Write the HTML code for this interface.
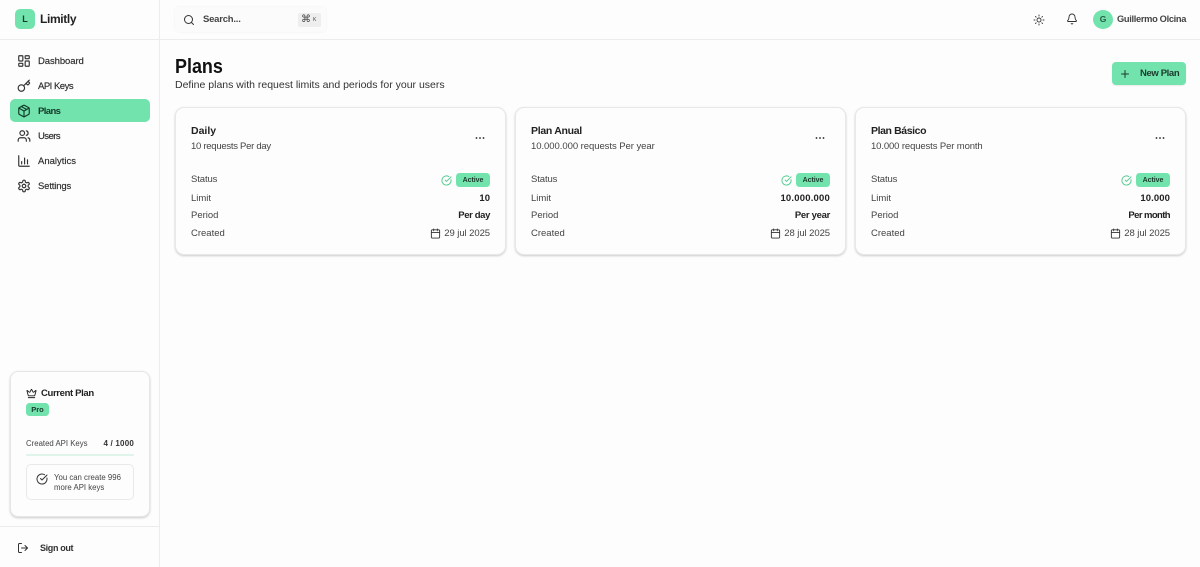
<!DOCTYPE html>
<html><head><meta charset="utf-8"><style>
*{box-sizing:border-box}
html,body{margin:0;padding:0;width:1200px;height:567px;overflow:hidden;background:#fdfdfd;font-family:"Liberation Sans",sans-serif;color:#171717}
.a{position:absolute;white-space:nowrap;line-height:1}
svg{position:absolute;fill:none;stroke:currentColor;stroke-width:2;stroke-linecap:round;stroke-linejoin:round}
.nav{font-size:9.5px;color:#2b2b2b;left:38px;-webkit-text-stroke:.15px #2b2b2b}
.ic{left:17px;color:#333}
.card{position:absolute;top:107px;width:331px;height:148px;border:1px solid #e8e8e8;border-radius:9px;background:#fdfdfd;box-shadow:0 1px 2px rgba(0,0,0,.2)}
.card .t{left:15px;top:18px;font-size:10.5px;font-weight:700;color:#222}
.card .s{left:15px;top:34px;font-size:9.5px;color:#444}
.card .l{left:15px;font-size:9.5px;color:#444}
.card .v{right:15px;font-size:9.5px;color:#222;font-weight:700}
.card .d{right:15px;font-size:9.5px;color:#444;letter-spacing:-.07px;top:121px}
.badge{position:absolute;right:15px;top:65px;width:34px;height:14px;background:#72e3ad;border-radius:3.5px;font-size:7px;font-weight:700;color:#1c3a2c;text-align:center;line-height:15px;letter-spacing:-.05px}
.dots circle{fill:#222;stroke:none}
</style></head><body>

<div class="a" style="left:159px;top:0;width:1px;height:567px;background:#ececec"></div>
<div class="a" style="left:0;top:39px;width:1200px;height:1px;background:#ececec"></div>

<div class="a" style="left:15px;top:9px;width:20px;height:20px;background:#72e3ad;border-radius:5px;text-align:center;line-height:20px;font-size:9px;font-weight:700;color:#173a2a">L</div>
<div class="a" style="left:40px;top:13px;font-size:12px;font-weight:700;color:#222;letter-spacing:-.35px;line-height:13px">Limitly</div>

<div class="a" style="left:10px;top:99px;width:140px;height:23px;background:#72e3ad;border-radius:5px"></div>

<svg class="ic" style="top:54px" width="14" height="14" viewBox="0 0 24 24"><rect x="3" y="3" width="7" height="9" rx="1"/><rect x="14" y="3" width="7" height="5" rx="1"/><rect x="14" y="12" width="7" height="9" rx="1"/><rect x="3" y="16" width="7" height="5" rx="1"/></svg>
<div class="a nav" style="top:57px;letter-spacing:-.08px">Dashboard</div>
<svg class="ic" style="top:79px" width="14" height="14" viewBox="0 0 24 24"><path d="m15.500 7.500 2.300 2.300a1 1 0 0 0 1.400 0l2.100-2.100a1 1 0 0 0 0-1.400L19 4"/><path d="m21 2-9.600 9.600"/><circle cx="7.500" cy="15.500" r="5.500"/></svg>
<div class="a nav" style="top:82px;letter-spacing:-.5px">API Keys</div>
<svg class="ic" style="top:104px;color:#123a28" width="14" height="14" viewBox="0 0 24 24"><path d="M11 21.730a2 2 0 0 0 2 0l7-4A2 2 0 0 0 21 16V8a2 2 0 0 0-1-1.730l-7-4a2 2 0 0 0-2 0l-7 4A2 2 0 0 0 3 8v8a2 2 0 0 0 1 1.730z"/><path d="M12 22V12"/><path d="M3.300 7 12 12l8.700-5"/><path d="m7.500 4.270 9 5.150"/></svg>
<div class="a nav" style="top:107px;color:#123a28;font-weight:700;letter-spacing:-.6px;-webkit-text-stroke:0">Plans</div>
<svg class="ic" style="top:129px" width="14" height="14" viewBox="0 0 24 24"><path d="M16 21v-2a4 4 0 0 0-4-4H6a4 4 0 0 0-4 4v2"/><circle cx="9" cy="7" r="4"/><path d="M22 21v-2a4 4 0 0 0-3-3.870"/><path d="M16 3.130a4 4 0 0 1 0 7.750"/></svg>
<div class="a nav" style="top:132px;letter-spacing:-.55px">Users</div>
<svg class="ic" style="top:154px" width="14" height="14" viewBox="0 0 24 24"><path d="M3 3v16a2 2 0 0 0 2 2h16"/><path d="M8 17v-4"/><path d="M13 17V7"/><path d="M18 17v-7"/></svg>
<div class="a nav" style="top:157px">Analytics</div>
<svg class="ic" style="top:179px" width="14" height="14" viewBox="0 0 24 24"><path d="M12.220 2h-.44a2 2 0 0 0-2 2v.18a2 2 0 0 1-1 1.730l-.43.25a2 2 0 0 1-2 0l-.15-.08a2 2 0 0 0-2.730.73l-.22.38a2 2 0 0 0 .73 2.730l.15.1a2 2 0 0 1 1 1.720v.51a2 2 0 0 1-1 1.740l-.15.09a2 2 0 0 0-.73 2.730l.22.38a2 2 0 0 0 2.730.73l.15-.08a2 2 0 0 1 2 0l.43.25a2 2 0 0 1 1 1.730V20a2 2 0 0 0 2 2h.44a2 2 0 0 0 2-2v-.18a2 2 0 0 1 1-1.730l.43-.25a2 2 0 0 1 2 0l.15.08a2 2 0 0 0 2.730-.73l.22-.39a2 2 0 0 0-.73-2.730l-.15-.08a2 2 0 0 1-1-1.740v-.5a2 2 0 0 1 1-1.740l.15-.09a2 2 0 0 0 .73-2.730l-.22-.38a2 2 0 0 0-2.730-.73l-.15.08a2 2 0 0 1-2 0l-.43-.25a2 2 0 0 1-1-1.730V4a2 2 0 0 0-2-2z"/><circle cx="12" cy="12" r="3"/></svg>
<div class="a nav" style="top:182px;letter-spacing:-.15px">Settings</div>

<div class="a" style="left:10px;top:371px;width:140px;height:146px;border:1px solid #e6e6e6;border-radius:8px;background:#fdfdfd;box-shadow:0 1px 2px rgba(0,0,0,.2)"></div>
<svg style="left:25.500px;top:387.500px;color:#222" width="11" height="11" viewBox="0 0 24 24"><path d="M11.562 3.266a.5.500 0 0 1 .876 0L15.390 8.870a1 1 0 0 0 1.516.294L21.183 5.500a.5.500 0 0 1 .798.519l-2.834 10.246a1 1 0 0 1-.956.734H5.810a1 1 0 0 1-.957-.734L2.020 6.020a.5.500 0 0 1 .798-.519l4.276 3.664a1 1 0 0 0 1.516-.294z"/><path d="M5 21h14"/></svg>
<div class="a" style="left:41px;top:389px;font-size:9.500px;font-weight:700;color:#222;letter-spacing:-.35px">Current Plan</div>
<div class="a" style="left:26px;top:403px;width:23px;height:13px;background:#72e3ad;border-radius:3.500px;font-size:7.500px;font-weight:700;color:#1c3a2c;text-align:center;line-height:13px">Pro</div>
<div class="a" style="left:26px;top:440px;font-size:7.800px;color:#444">Created API Keys</div>
<div class="a" style="right:1066px;top:440px;font-size:8px;font-weight:700;color:#333;letter-spacing:.2px">4 / 1000</div>
<div class="a" style="left:26px;top:454px;width:108px;height:2px;background:#dff5ea;border-radius:1px"></div>
<div class="a" style="left:26px;top:464px;width:108px;height:36px;border:1px solid #e9e9e9;border-radius:5px"></div>
<svg style="left:35.500px;top:472.500px;color:#333" width="12" height="12" viewBox="0 0 24 24"><path d="M21.801 10A10 10 0 1 1 17 3.335"/><path d="m9 11 3 3L22 4"/></svg>
<div class="a" style="left:54px;top:474px;font-size:7.800px;color:#444">You can create 996</div>
<div class="a" style="left:54px;top:484px;font-size:7.800px;color:#444">more API keys</div>

<div class="a" style="left:0;top:526px;width:159px;height:1px;background:#ececec"></div>
<svg style="left:16.500px;top:541.500px;color:#333" width="12" height="12" viewBox="0 0 24 24"><path d="M9 21H5a2 2 0 0 1-2-2V5a2 2 0 0 1 2-2h4"/><path d="m16 17 5-5-5-5"/><path d="M21 12H9"/></svg>
<div class="a" style="left:40px;top:544px;font-size:9px;font-weight:700;color:#333;letter-spacing:-.35px">Sign out</div>

<div class="a" style="left:175px;top:7px;width:151px;height:25px;background:#fbfbfb;border-radius:4px;box-shadow:0 0 2px rgba(0,0,0,.06)"></div>
<svg style="left:183px;top:13.500px;color:#333" width="12" height="12" viewBox="0 0 24 24"><path d="m21 21-4.300-4.300"/><circle cx="11" cy="11" r="8"/></svg>
<div class="a" style="left:203px;top:15px;font-size:9.500px;font-weight:700;color:#444;letter-spacing:-.22px">Search...</div>
<div class="a" style="left:298px;top:13px;width:23px;height:14px;background:#eee;border-radius:2px"></div>
<div class="a" style="left:301px;top:15px;font-size:10px;color:#444">⌘</div>
<div class="a" style="left:313px;top:18px;font-size:5px;color:#444">K</div>

<svg style="left:1033px;top:13.500px;color:#333;stroke-width:1.800" width="12" height="12" viewBox="0 0 24 24"><circle cx="12" cy="12" r="4"/><path d="M12 2v2M12 20v2M4.930 4.930l1.410 1.410M17.660 17.660l1.410 1.410M2 12h2M20 12h2M6.340 17.660l-1.410 1.410M19.070 4.930l-1.410 1.410"/></svg>
<svg style="left:1065.500px;top:13px;color:#333;stroke-width:1.800" width="12" height="12" viewBox="0 0 24 24"><path d="M10.268 21a2 2 0 0 0 3.464 0"/><path d="M3.262 15.326A1 1 0 0 0 4 17h16a1 1 0 0 0 .74-1.673C19.410 13.956 18 12.499 18 8A6 6 0 0 0 6 8c0 4.499-1.411 5.956-2.738 7.326"/></svg>
<div class="a" style="left:1093px;top:10px;width:20px;height:19px;background:#72e3ad;border-radius:50%;text-align:center;line-height:19px;font-size:8.500px;font-weight:700;color:#2a5a44">G</div>
<div class="a" style="left:1117px;top:15px;font-size:9.300px;font-weight:700;color:#444;letter-spacing:-.33px">Guillermo Olcina</div>

<div class="a" style="left:175px;top:57px;font-size:20.500px;font-weight:700;color:#111;transform:scaleX(.875);transform-origin:0 0">Plans</div>
<div class="a" style="left:175px;top:80px;font-size:10.500px;color:#333">Define plans with request limits and periods for your users</div>

<div class="a" style="left:1112px;top:62px;width:74px;height:23px;background:#72e3ad;border-radius:4px;box-shadow:0 1px 1px rgba(0,0,0,.08)"></div>
<svg style="left:1119px;top:67.500px;color:#1c3a2c" width="12" height="12" viewBox="0 0 24 24"><path d="M5 12h14M12 5v14"/></svg>
<div class="a" style="left:1140px;top:69px;font-size:9.500px;font-weight:700;color:#1c3a2c;letter-spacing:-.37px">New Plan</div>

<div class="card" style="left:175px">
<div class="a t">Daily</div><div class="a s" style="letter-spacing:-.27px">10 requests Per day</div>
<svg class="dots" style="left:299px;top:27.500px" width="10" height="4" viewBox="0 0 10 4"><circle cx="1.500" cy="2" r=".9"/><circle cx="5" cy="2" r=".9"/><circle cx="8.500" cy="2" r=".9"/></svg>
<div class="a l" style="top:67px;letter-spacing:-.1px">Status</div><div class="a l" style="top:86px">Limit</div><div class="a l" style="top:103px">Period</div><div class="a l" style="top:121px">Created</div>
<svg style="left:264.500px;top:66.500px;color:#4fc98c" width="11" height="11" viewBox="0 0 24 24"><path d="M21.801 10A10 10 0 1 1 17 3.335"/><path d="m9 11 3 3L22 4"/></svg>
<div class="badge">Active</div>
<div class="a v" style="top:86px">10</div><div class="a v" style="top:103px;letter-spacing:-.37px">Per day</div>
<svg style="left:254px;top:119.500px;color:#333" width="11" height="11" viewBox="0 0 24 24"><path d="M8 2v4M16 2v4"/><rect x="3" y="4" width="18" height="18" rx="2"/><path d="M3 10h18"/></svg>
<div class="a d">29 jul 2025</div>
</div>

<div class="card" style="left:515px">
<div class="a t" style="letter-spacing:-.3px">Plan Anual</div><div class="a s" style="letter-spacing:-.05px">10.000.000 requests Per year</div>
<svg class="dots" style="left:299px;top:27.500px" width="10" height="4" viewBox="0 0 10 4"><circle cx="1.500" cy="2" r=".9"/><circle cx="5" cy="2" r=".9"/><circle cx="8.500" cy="2" r=".9"/></svg>
<div class="a l" style="top:67px;letter-spacing:-.1px">Status</div><div class="a l" style="top:86px">Limit</div><div class="a l" style="top:103px">Period</div><div class="a l" style="top:121px">Created</div>
<svg style="left:264.500px;top:66.500px;color:#4fc98c" width="11" height="11" viewBox="0 0 24 24"><path d="M21.801 10A10 10 0 1 1 17 3.335"/><path d="m9 11 3 3L22 4"/></svg>
<div class="badge">Active</div>
<div class="a v" style="top:86px;letter-spacing:.2px">10.000.000</div><div class="a v" style="top:103px;letter-spacing:-.3px">Per year</div>
<svg style="left:254px;top:119.500px;color:#333" width="11" height="11" viewBox="0 0 24 24"><path d="M8 2v4M16 2v4"/><rect x="3" y="4" width="18" height="18" rx="2"/><path d="M3 10h18"/></svg>
<div class="a d">28 jul 2025</div>
</div>

<div class="card" style="left:855px">
<div class="a t" style="letter-spacing:-.4px">Plan Básico</div><div class="a s" style="letter-spacing:-.12px">10.000 requests Per month</div>
<svg class="dots" style="left:299px;top:27.500px" width="10" height="4" viewBox="0 0 10 4"><circle cx="1.500" cy="2" r=".9"/><circle cx="5" cy="2" r=".9"/><circle cx="8.500" cy="2" r=".9"/></svg>
<div class="a l" style="top:67px;letter-spacing:-.1px">Status</div><div class="a l" style="top:86px">Limit</div><div class="a l" style="top:103px">Period</div><div class="a l" style="top:121px">Created</div>
<svg style="left:264.500px;top:66.500px;color:#4fc98c" width="11" height="11" viewBox="0 0 24 24"><path d="M21.801 10A10 10 0 1 1 17 3.335"/><path d="m9 11 3 3L22 4"/></svg>
<div class="badge">Active</div>
<div class="a v" style="top:86px;letter-spacing:.1px">10.000</div><div class="a v" style="top:103px;letter-spacing:-.6px">Per month</div>
<svg style="left:254px;top:119.500px;color:#333" width="11" height="11" viewBox="0 0 24 24"><path d="M8 2v4M16 2v4"/><rect x="3" y="4" width="18" height="18" rx="2"/><path d="M3 10h18"/></svg>
<div class="a d">28 jul 2025</div>
</div>

</body></html>
